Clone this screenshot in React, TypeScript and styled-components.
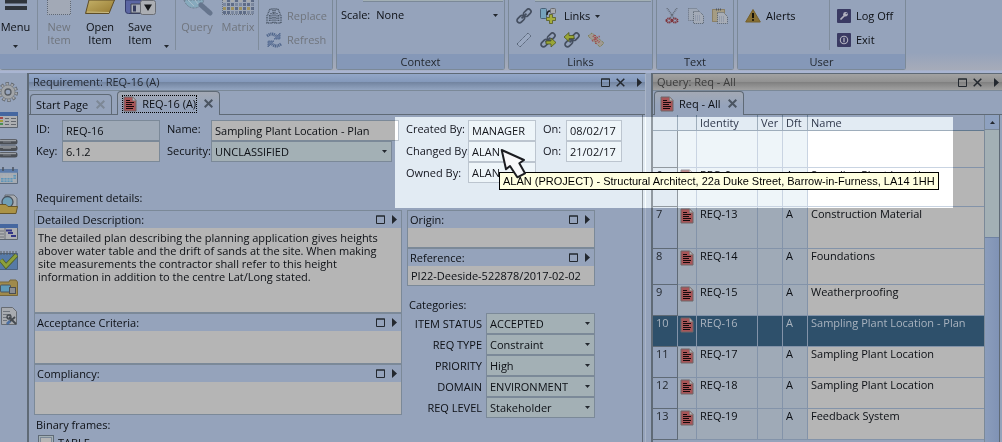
import React from "react";
import styled, { createGlobalStyle, css } from "styled-components";

const color = {
  panel: "#95a3bb",
  footer: "#8598b8",
  line: "#7b8998",
  edge: "#5f6a76",
  paper: "#b5b5b5",
  locked: "#9faab7",
  picker: "#a3b0b5",
  ink: "#0c0f14",
  soft: "#23282f",
  muted: "#70757d",
};

const Global = createGlobalStyle`
  * { box-sizing: border-box; }
  body {
    margin: 0;
    background: ${color.panel};
    color: ${color.ink};
    font: 11px/16px "Open Sans", "Noto Sans", sans-serif;
  }
  button, input, select, textarea { font: inherit; color: inherit; margin: 0; padding: 0; border: 0; border-radius: 0; background: none; }
  svg { display: block; flex: none; }
`;

const Page = styled.div`
  position: relative;
  display: flex;
  flex-direction: column;
  height: 100vh;
  overflow: hidden;
`;

/* ---------- ribbon ---------- */

const Ribbon = styled.header`
  display: flex;
  gap: 3px;
  flex: none;
  height: 73px;
  padding-bottom: 3px;
  background: linear-gradient(#95a3bb 72%, #a6abb9 96%, #a9b5d2 97%);
`;
const Group = styled.section<{ $width: number }>`
  display: flex;
  flex-direction: column;
  flex: none;
  width: ${(p) => p.$width}px;
  border: 1px solid ${color.line};
  border-top: 0;
  border-radius: 0 0 3px 3px;
  background: ${color.panel};
  &:first-child { border-left: 0; }
`;
const GroupBody = styled.div`
  display: flex;
  height: 54px;
`;
const GroupName = styled.h2`
  margin: 0;
  height: 15px;
  background: ${color.footer};
  font-size: 11px;
  font-weight: 400;
  line-height: 16px;
  text-align: center;
  color: ${color.soft};
`;
const Rule = styled.div`
  flex: none;
  width: 1px;
  height: 50px;
  background: #7f8c9c;
`;
const BigButton = styled.button<{ $off?: boolean; $width?: number }>`
  display: flex;
  flex-direction: column;
  flex: none;
  align-items: center;
  width: ${(p) => p.$width ?? 40}px;
  line-height: 13px;
  color: ${(p) => (p.$off ? color.muted : color.ink)};
  svg + span { margin-top: 4px; }
`;
const MenuButton = styled(BigButton)`
  padding-right: 6px;
`;
const Caret = styled.svg`
  width: 5px;
  height: 3px;
  fill: ${color.soft};
`;
const MenuCaret = styled(Caret)`margin-top: 12px;`;
const MoreButton = styled.button`
  display: flex;
  flex: none;
  align-items: flex-end;
  width: 15px;
  height: 48px;
  padding-left: 4px;
`;
const SmallColumn = styled.div<{ $tight?: boolean }>`
  display: flex;
  flex-direction: column;
  gap: 8px;
  padding: ${(p) => (p.$tight ? 6 : 8)}px 7px 0;
`;
const AccountColumn = styled(SmallColumn)`
  width: 75px;
`;
const SmallRow = styled.div`
  display: flex;
  gap: 8px;
`;
const SmallButton = styled.button<{ $off?: boolean }>`
  display: flex;
  align-items: center;
  gap: 5px;
  height: 16px;
  line-height: 16px;
  color: ${(p) => (p.$off ? color.muted : color.ink)};
`;
const Stack = styled.div`
  display: flex;
  flex-direction: column;
  flex: 1;
`;
const ClippedBox = styled.div`
  height: 2px;
  margin: 0 1px 0 26px;
  border-bottom: 1px solid ${color.line};
  background: ${color.picker};
`;
const ScaleRow = styled.div`
  display: flex;
  align-items: center;
  gap: 6px;
  padding: 5px 6px 0 4px;
`;
const PlainPicker = styled.div`
  display: flex;
  align-items: center;
  flex: 1;
  select { flex: 1; appearance: none; height: 16px; }
`;

/* ---------- work area ---------- */

const Work = styled.main`
  display: flex;
  flex: 1;
  min-height: 0;
`;
const SideBar = styled.nav`
  display: flex;
  flex-direction: column;
  gap: 8px;
  width: 27px;
  padding-top: 9px;
  flex: none;
  button { display: block; width: 18px; height: 20px; }
`;
const Pane = styled.section<{ $fixed?: boolean }>`
  display: flex;
  flex-direction: column;
  min-width: 0;
  border-left: 2px solid ${color.edge};
  border-top: 1px solid ${color.edge};
  ${(p) => (p.$fixed ? css`flex: 0 0 351px;` : css`flex: 1; border-right: 1px solid #a9b4c6; margin-right: 5px;`)}
`;
const TitleBar = styled.header<{ $idle?: boolean }>`
  display: flex;
  align-items: center;
  flex: none;
  height: 17px;
  padding: 0 3px 0 4px;
  border-bottom: 1px solid ${color.line};
  background: ${(p) =>
    p.$idle
      ? "linear-gradient(#a2a2a2, #929292 48%, #7f7f7f 50%, #a0a0a0)"
      : "linear-gradient(#93a7c8, #8499bb 48%, #71839f 50%, #93a5c1)"};
  color: ${(p) => (p.$idle ? "#3c3c3c" : "#242a33")};
  h1 { flex: 1; margin: 0; font-size: 11px; font-weight: 400; }
`;
const WindowButtons = styled.div`
  display: flex;
  align-items: center;
  gap: 6px;
  button:last-child { margin-left: 6px; }
`;
const Tabs = styled.div`
  display: flex;
  align-items: flex-end;
  gap: 5px;
  flex: none;
  height: 24px;
  padding-left: 1px;
  border-bottom: 1px solid ${color.edge};
`;
const Tab = styled.div<{ $active?: boolean }>`
  display: flex;
  align-items: center;
  gap: 7px;
  height: ${(p) => (p.$active ? 24 : 20)}px;
  margin-bottom: ${(p) => (p.$active ? -1 : 0)}px;
  padding: 0 6px 0 4px;
  border: 1px solid ${color.edge};
  border-bottom: 0;
  border-radius: 4px 4px 0 0;
  background: ${(p) => (p.$active ? "linear-gradient(#a3a9b4, #95a3bb 60%)" : color.panel)};
`;
const TabLabel = styled.button<{ $focus?: boolean }>`
  display: flex;
  align-items: center;
  gap: 5px;
  height: 18px;
  outline: ${(p) => (p.$focus ? "1px dotted #000" : "0")};
  outline-offset: -1px;
  padding: 0 1px;
`;
const Sheet = styled.div`
  flex: 1;
  min-height: 0;
  margin-right: 2px;
  border-right: 1px solid ${color.edge};
  overflow: hidden;
`;

/* ---------- form ---------- */

const TopForm = styled.div`
  display: flex;
  gap: 7px;
  padding: 3px 20px 0 7px;
`;
const Fields = styled.div<{ $grow?: boolean; $label: number; $field?: number }>`
  display: grid;
  grid-template-columns: ${(p) => p.$label}px ${(p) => (p.$field ? `${p.$field}px` : "minmax(0, 1fr)")};
  flex: ${(p) => (p.$grow ? 1 : "none")};
`;
const Labels = styled.div`
  display: flex;
  flex-direction: column;
  overflow: hidden;
  white-space: nowrap;
  line-height: 22px;
`;
const Values = styled.div`
  display: flex;
  flex-direction: column;
  padding-top: 2px;
`;
const Field = styled.input<{ $locked?: boolean }>`
  width: 100%;
  height: 21px;
  padding: 0 3px;
  border: 1px solid ${color.line};
  background: ${(p) => (p.$locked ? color.locked : color.paper)};
`;
const PickerBox = styled.div<{ $short?: boolean }>`
  display: flex;
  align-items: center;
  height: 21px;
  margin-right: ${(p) => (p.$short ? 7 : 0)}px;
  padding-right: 4px;
  border: 1px solid ${color.line};
  background: ${color.picker};
  select { flex: 1; min-width: 0; height: 19px; padding-left: 3px; appearance: none; }
`;
const Heading = styled.h3<{ $above: number; $left: number; $below?: number }>`
  margin: ${(p) => p.$above}px 0 ${(p) => p.$below ?? 0}px ${(p) => p.$left}px;
  font-size: 11px;
  font-weight: 400;
  line-height: 17px;
`;
const Details = styled.div`
  display: flex;
  gap: 5px;
  padding: 0 47px 0 5px;
`;
const WideColumn = styled.div`
  flex: 1;
  min-width: 0;
`;
const NarrowColumn = styled.div`
  width: 188px;
  flex: none;
`;
const Memo = styled.div`
  border: 1px solid ${color.line};
`;
const MemoHead = styled.div`
  display: flex;
  align-items: center;
  gap: 7px;
  height: 17px;
  padding: 0 4px 0 2px;
  label { flex: 1; line-height: 17px; }
`;
const MemoText = styled.textarea<{ $height: number }>`
  display: block;
  width: 100%;
  height: ${(p) => p.$height}px;
  padding: 3px 12px 3px 3px;
  line-height: 13px;
  resize: none;
  overflow: hidden;
  background: ${color.paper};
`;
const CategoryRow = styled.div`
  display: grid;
  grid-template-columns: 75px minmax(0, 1fr);
  gap: 4px;
  label { line-height: 21px; text-align: right; white-space: nowrap; }
`;
const CheckRow = styled.label`
  display: flex;
  align-items: center;
  gap: 4px;
  margin: 2px 0 0 4px;
  line-height: 16px;
  input {
    appearance: none;
    width: 16px;
    height: 16px;
    border: 1px solid ${color.edge};
    background: ${color.paper};
    box-shadow: inset 0 0 0 1px ${color.picker}, inset 0 0 0 2px ${color.line};
  }
`;

/* ---------- query results ---------- */

const Results = styled.div`
  display: flex;
  height: 100%;
`;
const Grid = styled.table`
  flex: 1;
  align-self: flex-start;
  table-layout: fixed;
  border-collapse: separate;
  border-spacing: 0;
  th, td {
    padding: 0 0 0 3px;
    vertical-align: top;
    text-align: left;
    font-weight: 400;
    white-space: nowrap;
    overflow: hidden;
    line-height: 13px;
    border-right: 1px solid #8393a9;
    border-bottom: 1px solid #8393a9;
  }
  thead th { height: 16px; line-height: 15px; border-color: #62798f; color: #17243a; }
  thead th:last-child, td:last-child { border-right: 0; }
`;
const Row = styled.tr<{ $height: number; $selected?: boolean }>`
  height: ${(p) => p.$height}px;
  th { background: ${color.panel}; border-color: ${color.edge}; color: ${color.soft}; }
  td { background: ${color.locked}; }
  td:nth-child(2) { padding: 1px 0 0 2px; }
  td:last-child { background: ${color.paper}; }
  ${(p) =>
    p.$selected &&
    css`
      && th, && td { background: #2e506b; color: #a9b3bf; border-right-color: #8393a9; }
    `}
`;
const ScrollBar = styled.div`
  display: flex;
  flex-direction: column;
  width: 16px;
  margin-right: -1px;
  border-left: 1px solid ${color.line};
  background: ${color.picker};
`;
const ScrollUp = styled.button`
  display: flex;
  align-items: center;
  justify-content: center;
  height: 15px;
  background: #8ea1c0;
  border-bottom: 1px solid ${color.line};
`;
const Thumb = styled.div`
  flex: 1;
  margin-top: 107px;
  border-top: 1px solid #6f82a3;
  background: linear-gradient(90deg, #8b9dbc, #7f92b5);
`;

/* ---------- layers above the window ---------- */

const Spotlight = styled.div`
  position: absolute;
  left: 395px;
  top: 117px;
  width: 558px;
  height: 91px;
  backdrop-filter: brightness(1.45) saturate(0.45);
  pointer-events: none;
`;
const Tooltip = styled.div`
  position: absolute;
  left: 499px;
  top: 172px;
  height: 18px;
  padding: 0 3px;
  border: 1px solid #000;
  background: #ffffe1;
  color: #000;
  font: 11px/16px "Liberation Sans", Arial, sans-serif;
  white-space: nowrap;
`;
const Pointer = styled.svg`
  position: absolute;
  left: 498px;
  top: 147px;
  pointer-events: none;
`;

/* ---------- drawings ---------- */

const Down = () => <Caret viewBox="0 0 5 3"><path d="M0 0h5L2.5 3z" /></Caret>;

const MaxIcon = () => (
  <svg width="9" height="9" viewBox="0 0 9 9"><path d="M.5 1h8v7.500h-8zM0 1h9" fill="none" stroke="#23282f" /></svg>
);
const PlayIcon = () => (
  <svg width="5" height="9" viewBox="0 0 5 9"><path d="M0 0l5 4.500L0 9z" fill="#23282f" /></svg>
);
const CrossIcon = ({ tone = "#23282f", weight = 1.5 }: { tone?: string; weight?: number }) => (
  <svg width="9" height="9" viewBox="0 0 9 9"><path d="M.7.7l7.600 7.600M8.300.7L.7 8.300" stroke={tone} strokeWidth={weight} /></svg>
);
const ReqIcon = () => (
  <svg width="14" height="16" viewBox="0 0 14 16">
    <path d="M1 1h8.500L13 4.500V15H1z" fill="#a95558" stroke="#6f6668" />
    <path d="M9.500.8v4H13z" fill="#b5b5b5" stroke="#77706f" strokeWidth=".6" />
    <path d="M3 4.500h4M3 6.500h8M3 8.500h6M3 10.500h8M3 12.500h7" stroke="#160a0c" />
  </svg>
);

const MenuIcon = () => (
  <svg width="22" height="16" viewBox="0 0 22 16"><path d="M0 1.500h22M0 8h22" stroke="#30353c" strokeWidth="4" /></svg>
);
const NewIcon = () => (
  <svg width="26" height="16" viewBox="0 0 26 16">
    <path d="M1 0h24v15H1z" fill="#a2a9b6" />
    <path d="M1.500 0v14.500h23V0" fill="none" stroke="#5e6877" strokeDasharray="1 1" />
  </svg>
);
const OpenIcon = () => (
  <svg width="32" height="16" viewBox="0 0 32 16">
    <defs><linearGradient id="open" x2="1" y2="1"><stop stopColor="#c4b169" /><stop offset="1" stopColor="#96792f" /></linearGradient></defs>
    <path d="M5 0h25.500L25 13.500H1.500z" fill="url(#open)" stroke="#5d4d28" />
    <path d="M3 12l22 .5" stroke="#c9bb84" />
  </svg>
);
const SaveIcon = () => (
  <svg width="32" height="16" viewBox="0 0 32 16">
    <path d="M1.500 0v11q0 2.500 3 2.500h20V0z" fill="#5b66a3" stroke="#353d6b" />
    <path d="M7 4h10v9H7z" fill="#a8adb8" stroke="#3e4454" />
    <path d="M9 5.500h3v6H9z" fill="#343b5e" />
    <rect x="16.500" y=".5" width="15" height="14" rx="2" fill="#abaeb3" stroke="#6a6e75" />
    <path d="M20 4.500h8L24 11z" fill="#15171a" />
  </svg>
);
const QueryIcon = () => (
  <svg width="32" height="16" viewBox="0 0 32 16">
    <path d="M3 0q3 8 10 8t10-8z" fill="#87aabd" stroke="#6e7f90" strokeDasharray="2 1" />
    <path d="M7 0l6 6M14 0l3 4" stroke="#a9bccb" />
    <path d="M20 5l9 8" stroke="#66758d" strokeWidth="5" strokeLinecap="round" strokeDasharray="1 .6" />
  </svg>
);
const MatrixIcon = () => {
  const fills = ["#a9abad", "#53627f", "#a08e50", "#75829b"];
  const cells = [];
  for (let r = 0; r < 4; r++)
    for (let c = 0; c < 8; c++)
      cells.push(<rect key={`${r}-${c}`} x={1 + c * 4} y={r * 4 - 1} width="3" height="3" fill={fills[(r * 3 + c * c + r * c) % 4]} opacity=".85" />);
  return (
    <svg width="32" height="16" viewBox="0 0 32 16">
      <path d="M.5 0v14.500h31V0" fill="#9da7b7" stroke="#677181" strokeDasharray="1 1" />
      {cells}
    </svg>
  );
};
const ReplaceIcon = () => (
  <svg width="16" height="16" viewBox="0 0 16 16" fill="none" stroke="#4c5868" strokeDasharray="1 .7">
    <path d="M1 15V8L4 1h3v14zM9 15V1h3l3 7v7z" strokeWidth="1.400" />
    <path d="M3.500 13V7M5 5v8M11 5v8M12.700 13V7M7 5h2" strokeWidth="1.300" />
  </svg>
);
const RefreshIcon = () => (
  <svg width="16" height="16" viewBox="0 0 16 16" fill="none" stroke="#50668c" strokeDasharray="1.200 .6">
    <path d="M1 4q5-4 9 0M15 12q-5 4-9 0" strokeWidth="3" />
    <path d="M14 1v6H8zM2 15V9h6z" fill="#687ca0" />
  </svg>
);

type Mark = "none" | "out" | "in";
const ChainIcon = ({ mark = "none" }: { mark?: Mark }) => (
  <svg width="16" height="16" viewBox="0 0 16 16" fill="none">
    <g stroke="#454f60" strokeWidth="1.700" transform="rotate(-45 8 8)">
      <rect x="-.8" y="5.500" width="8.500" height="5" rx="2.500" />
      <rect x="8.300" y="5.500" width="8.500" height="5" rx="2.500" />
      <path d="M4.500 8h7" />
    </g>
    {mark === "out" && <path d="M6 9h5V6l5 4.500-5 4.500v-3H6z" fill="#9aa636" stroke="#4d5620" strokeWidth=".8" />}
    {mark === "in" && <path d="M10 3.500H5v-3L0 5l5 4.500v-3h5z" fill="#9aa636" stroke="#4d5620" strokeWidth=".8" />}
  </svg>
);
const AddLinkIcon = () => (
  <svg width="16" height="16" viewBox="0 0 16 16">
    <rect x=".5" y=".5" width="6" height="10" rx="1" fill="#76a3bd" stroke="#496177" />
    <rect x="10.500" y=".5" width="5" height="5" rx="1" fill="#a7a9ad" stroke="#6b6c70" />
    <path d="M7 7q0-4 3-4" fill="none" stroke="#1a1d22" strokeWidth="1.500" />
    <path d="M9.500 6.500h3v3h3v3h-3v3h-3v-3h-3v-3h3z" fill="#a5ad3c" stroke="#555c22" strokeWidth=".8" />
  </svg>
);
const BarIcon = () => (
  <svg width="16" height="16" viewBox="0 0 16 16">
    <path d="M1 12L12 1l3 3L4 15z" fill="#9ba9c1" stroke="#4f5b6d" strokeWidth=".9" strokeDasharray="1.500 .5" />
  </svg>
);
const CutLinkIcon = () => (
  <svg width="16" height="16" viewBox="0 0 16 16">
    <path d="M0 4l4-3 12 10-4 4z" fill="#a09a93" stroke="#74763e" strokeDasharray="1 1" />
    <path d="M5 4l7 7M4 9l8-5M7 3l1 9" stroke="#a04a50" strokeWidth="1.800" strokeDasharray="1 1" />
  </svg>
);
const CutIcon = () => (
  <svg width="16" height="16" viewBox="-1 0 16 16" fill="none">
    <path d="M2 0l7 10M12 0L5 10" stroke="#636b78" strokeWidth="1.600" strokeDasharray="1 .8" />
    <path d="M1.500 12.500a2.500 2 0 1 0 5 0a2.500 2 0 1 0-5 0M7.500 12.500a2.500 2 0 1 0 5 0a2.500 2 0 1 0-5 0" stroke="#7e2f35" strokeWidth="2" strokeDasharray="1.200 .6" />
  </svg>
);
const CopyIcon = () => (
  <svg width="16" height="16" viewBox="0 0 16 16" stroke="#66707f" strokeDasharray="1 1">
    <path d="M.5.5h8l2 2v10H.5z" fill="#9fa8b6" />
    <path d="M5.500 3.500h6l4 4v8h-10z" fill="#a4abb7" stroke="#59636f" />
    <path d="M7 8h6M7 10h6M7 12h6" stroke="#7e8ba3" />
  </svg>
);
const PasteIcon = () => (
  <svg width="16" height="16" viewBox="0 0 16 16" stroke="#78602f" strokeDasharray="1 1">
    <path d="M.5 1.500h12v12H.5z" fill="#a59c83" />
    <path d="M4 1.500h5" stroke="#4f5660" strokeWidth="2" />
    <path d="M5.500 4.500h6l4 4v7h-10z" fill="#a8adb6" stroke="#59636f" />
    <path d="M7 9h6M7 11h6M7 13h6" stroke="#7e8ba3" />
  </svg>
);
const AlertIcon = () => (
  <svg width="16" height="16" viewBox="0 0 16 16">
    <path d="M8 1.500L15.300 14H.7z" fill="#876f33" stroke="#75602c" strokeLinejoin="round" />
    <path d="M8 5v5M8 11.200v1.600" stroke="#15120a" strokeWidth="2" />
  </svg>
);
const KeyIcon = () => (
  <svg width="14" height="14" viewBox="0 0 14 14">
    <rect width="14" height="14" rx="1" fill="#3a3a63" />
    <circle cx="8.500" cy="5.300" r="2.300" fill="#b2b2bf" /><path d="M8 6l-4.500 4.500" stroke="#b2b2bf" strokeWidth="1.700" /><circle cx="9.300" cy="4.600" r=".7" fill="#3a3a63" />
  </svg>
);
const ExitIcon = () => (
  <svg width="14" height="14" viewBox="0 0 14 14">
    <rect width="14" height="14" rx="1" fill="#3a3a63" />
    <circle cx="7" cy="7" r="3.700" fill="none" stroke="#b2b2bf" strokeWidth="1.100" /><path d="M7 4.800v4.400" stroke="#b2b2bf" strokeWidth="1.300" />
  </svg>
);

const sideIcons: { name: string; art: React.ReactNode }[] = [
  {
    name: "Settings",
    art: (
      <>
        <circle cx="10" cy="10" r="8" fill="none" stroke="#5d6269" strokeWidth="4" strokeDasharray="3 2.027" />
        <circle cx="10" cy="10" r="8" fill="none" stroke="#a5a8ac" strokeWidth="2.400" strokeDasharray="2 3.027" strokeDashoffset="-.5" />
        <circle cx="10" cy="10" r="7" fill="#a2a5a9" stroke="#74787d" strokeWidth=".7" />
        <circle cx="10" cy="10" r="3" fill="#95a3bb" stroke="#565b62" strokeWidth="1.300" />
      </>
    ),
  },
  {
    name: "Lists",
    art: (
      <>
        <path d="M1.500 2.500h18v15h-18z" fill="#adafb2" stroke="#5c6570" />
        <path d="M1 4h19" stroke="#4567a0" strokeWidth="4" />
        <path d="M2 8h3" stroke="#a34a4a" strokeWidth="2" /><path d="M2 11h3" stroke="#a59a3c" strokeWidth="2" /><path d="M2 14h3" stroke="#4a8f55" strokeWidth="2" />
        <path d="M7 8.500h4M7 11.500h4M7 14.500h4M13 8.500h5M13 11.500h5M13 14.500h5" stroke="#62676e" />
      </>
    ),
  },
  {
    name: "Database",
    art: (
      <>
        {[1, 7.5, 14].map((y) => (
          <g key={y}>
            <rect x="1" y={y} width="18.500" height="5.500" rx="2.500" fill="#4a4e54" />
            <path d={`M2 ${y + 1.5}h16`} stroke="#9b9fa4" strokeWidth="1.500" />
            <path d={`M5 ${y + 3}h8`} stroke="#7b7f85" />
          </g>
        ))}
      </>
    ),
  },
  {
    name: "Calendar",
    art: (
      <>
        <path d="M1.500 3.500h18v14h-18z" fill="#a4aab2" stroke="#5d6b7d" />
        <path d="M1 5h19" stroke="#5c7cab" strokeWidth="3.500" /><path d="M5 1v4M15 1v4" stroke="#4a525d" strokeWidth="1.500" />
        <path d="M3 12h12V9h3v4h-3v3H3z" fill="#5f94b8" /><path d="M6 8v8M9 8v8M12 8v8M15 8v8M3 11h15M3 14h15" stroke="#b0b4b8" strokeWidth=".7" />
      </>
    ),
  },
  {
    name: "Find",
    art: (
      <>
        <path d="M7 1h9l3 3v9H7z" fill="#a7abb0" stroke="#666c74" />
        <circle cx="9.500" cy="8" r="5.500" fill="#6f9fb7" stroke="#48525e" strokeWidth="1.300" />
        <path d="M1 10.500h7l2 2h9.500L18 19.500H1z" fill="#ab9346" stroke="#65562c" />
      </>
    ),
  },
  {
    name: "Plan",
    art: (
      <>
        <path d="M1.500 2.500h18v15h-18z" fill="#adafb2" stroke="#5c6570" />
        <path d="M1 4h19" stroke="#4567a0" strokeWidth="4" />
        <path d="M2 9h4M2 12h4M2 15h4M7 6v11" stroke="#6e737a" />
        <path d="M8 8.500h6M10 11h5M13 14h5" stroke="#343786" strokeWidth="2" />
      </>
    ),
  },
  {
    name: "Tasks",
    art: (
      <>
        <path d="M1.500 3.500h18v16h-18z" fill="#567aa7" stroke="#49617f" />
        <path d="M3 5V1M6 5V1M9 5V1M12 5V1M15 5V1M18 5V1" stroke="#555b62" />
        <path d="M3 10l5 6L18.500 5" fill="none" stroke="#4e5e28" strokeWidth="4.500" />
        <path d="M3 10l5 6L18.500 5" fill="none" stroke="#8ca03c" strokeWidth="3" />
      </>
    ),
  },
  {
    name: "Assets",
    art: (
      <>
        <path d="M1 4h10l1-2h6l1.500 2v13.500H1z" fill="#a08a4b" stroke="#76663a" />
        <rect x="2.500" y="7" width="10" height="7" rx="1" fill="#5f9ab8" stroke="#4a5560" />
        <rect x="11.500" y="9.500" width="6" height="6" fill="#8a8d92" stroke="#4b4e53" />
      </>
    ),
  },
  {
    name: "Reports",
    art: (
      <>
        <path d="M3.500 1.500h11l4 4v13h-15z" fill="#a8abb0" stroke="#666b72" />
        <path d="M5 5.500h7M5 8.500h8M5 11.500h5M5 14.500h4" stroke="#6f747c" />
        <path d="M9 18l8-7M11 11l7 7" stroke="#44494f" strokeWidth="1.800" />
        <circle cx="11" cy="11" r="2" fill="none" stroke="#44494f" strokeWidth="1.300" /><path d="M9 18l3-3" stroke="#4b70a5" strokeWidth="2.500" />
      </>
    ),
  },
];

/* ---------- data ---------- */

const categories = [
  ["ITEM STATUS", "ACCEPTED"],
  ["REQ TYPE", "Constraint"],
  ["PRIORITY", "High"],
  ["DOMAIN", "ENVIRONMENT"],
  ["REQ LEVEL", "Stakeholder"],
];

const rows: { no: string; id: string; dft: string; name: string; height: number }[] = [
  { no: "", id: "", dft: "", name: "", height: 37 },
  { no: "6", id: "REQ-9", dft: "A", name: "Sampling Plant Location", height: 39 },
  { no: "7", id: "REQ-13", dft: "A", name: "Construction Material", height: 42 },
  { no: "8", id: "REQ-14", dft: "A", name: "Foundations", height: 36 },
  { no: "9", id: "REQ-15", dft: "A", name: "Weatherproofing", height: 31 },
  { no: "10", id: "REQ-16", dft: "A", name: "Sampling Plant Location - Plan", height: 31 },
  { no: "11", id: "REQ-17", dft: "A", name: "Sampling Plant Location", height: 31 },
  { no: "12", id: "REQ-18", dft: "A", name: "Sampling Plant Location", height: 31 },
  { no: "13", id: "REQ-19", dft: "A", name: "Feedback System", height: 31 },
];

const description =
  "The detailed plan describing the planning application gives heights abover water table and the drift of sands at the site. When making site measurements the contractor shall refer to this height information in addition to the centre Lat/Long stated.";

/* ---------- pieces ---------- */

const Picker = ({ id, value, short }: { id: string; value: string; short?: boolean }) => (
  <PickerBox $short={short}>
    <select id={id} defaultValue={value}><option>{value}</option></select>
    <Down />
  </PickerBox>
);

const MemoField = ({ id, label, height, value = "" }: { id: string; label: string; height: number; value?: string }) => (
  <Memo>
    <MemoHead>
      <label htmlFor={id}>{label}</label>
      <button aria-label="Enlarge"><MaxIcon /></button>
      <button aria-label="More"><PlayIcon /></button>
    </MemoHead>
    <MemoText id={id} $height={height} defaultValue={value} spellCheck={false} />
  </Memo>
);

const Controls = () => (
  <WindowButtons>
    <button aria-label="Maximize"><MaxIcon /></button>
    <button aria-label="Close"><CrossIcon /></button>
    <button aria-label="More"><PlayIcon /></button>
  </WindowButtons>
);

export default function App() {
  return (
    <Page>
      <Global />
      <Ribbon>
        <Group $width={333}>
          <GroupBody>
            <MenuButton $width={37}><MenuIcon /><span>Menu</span><MenuCaret viewBox="0 0 5 3"><path d="M0 0h5L2.500 3z" /></MenuCaret></MenuButton>
            <Rule />
            <BigButton $off $width={42}><NewIcon /><span>New<br />Item</span></BigButton>
            <BigButton><OpenIcon /><span>Open<br />Item</span></BigButton>
            <BigButton><SaveIcon /><span>Save<br />Item</span></BigButton>
            <MoreButton aria-label="More save options"><Down /></MoreButton>
            <Rule />
            <BigButton $off $width={42}><QueryIcon /><span>Query</span></BigButton>
            <BigButton $off><MatrixIcon /><span>Matrix</span></BigButton>
            <Rule />
            <SmallColumn>
              <SmallButton $off><ReplaceIcon />Replace</SmallButton>
              <SmallButton $off><RefreshIcon />Refresh</SmallButton>
            </SmallColumn>
          </GroupBody>
          <GroupName />
        </Group>
        <Group $width={169}>
          <GroupBody>
            <Stack>
              <ClippedBox />
              <ScaleRow>
                <label htmlFor="scale">Scale:</label>
                <PlainPicker>
                  <select id="scale" defaultValue="None"><option>None</option></select>
                  <Down />
                </PlainPicker>
              </ScaleRow>
            </Stack>
          </GroupBody>
          <GroupName>Context</GroupName>
        </Group>
        <Group $width={145}>
          <GroupBody>
            <Stack>
              <ClippedBox />
              <SmallColumn $tight>
                <SmallRow>
                  <SmallButton aria-label="Link"><ChainIcon /></SmallButton>
                  <SmallButton aria-label="Add link"><AddLinkIcon /></SmallButton>
                  <SmallButton>Links<Down /></SmallButton>
                </SmallRow>
                <SmallRow>
                  <SmallButton aria-label="Mark"><BarIcon /></SmallButton>
                  <SmallButton aria-label="Outgoing links"><ChainIcon mark="out" /></SmallButton>
                  <SmallButton aria-label="Incoming links"><ChainIcon mark="in" /></SmallButton>
                  <SmallButton aria-label="Remove link"><CutLinkIcon /></SmallButton>
                </SmallRow>
              </SmallColumn>
            </Stack>
          </GroupBody>
          <GroupName>Links</GroupName>
        </Group>
        <Group $width={78}>
          <GroupBody>
            <SmallColumn>
              <SmallRow>
                <SmallButton aria-label="Cut"><CutIcon /></SmallButton>
                <SmallButton aria-label="Copy"><CopyIcon /></SmallButton>
                <SmallButton aria-label="Paste"><PasteIcon /></SmallButton>
              </SmallRow>
            </SmallColumn>
          </GroupBody>
          <GroupName>Text</GroupName>
        </Group>
        <Group $width={169}>
          <GroupBody>
            <Stack>
              <SmallColumn><SmallButton><AlertIcon />Alerts</SmallButton></SmallColumn>
            </Stack>
            <Rule />
            <AccountColumn>
              <SmallButton><KeyIcon />Log Off</SmallButton>
              <SmallButton><ExitIcon />Exit</SmallButton>
            </AccountColumn>
          </GroupBody>
          <GroupName>User</GroupName>
        </Group>
      </Ribbon>

      <Work>
        <SideBar>
          {sideIcons.map((item) => (
            <button key={item.name} aria-label={item.name}>
              <svg width="18" height="20" viewBox="2 0 18 20">{item.art}</svg>
            </button>
          ))}
        </SideBar>

        <Pane>
          <TitleBar><h1>Requirement: REQ-16 (A)</h1><Controls /></TitleBar>
          <Tabs>
            <Tab><TabLabel>Start Page</TabLabel><button aria-label="Close tab"><CrossIcon tone="#7d8896" weight={2} /></button></Tab>
            <Tab $active><TabLabel $focus><ReqIcon />REQ-16 (A)</TabLabel><button aria-label="Close tab"><CrossIcon tone="#4b5562" weight={2} /></button></Tab>
          </Tabs>
          <Sheet>
            <TopForm>
              <Fields $label={26} $field={98}>
                <Labels><label htmlFor="id">ID:</label><label htmlFor="key">Key:</label></Labels>
                <Values><Field id="id" $locked readOnly value="REQ-16" /><Field id="key" defaultValue="6.1.2" /></Values>
              </Fields>
              <Fields $label={44} $grow>
                <Labels><label htmlFor="name">Name:</label><label htmlFor="security">Security:</label></Labels>
                <Values><Field id="name" defaultValue="Sampling Plant Location - Plan" /><Picker id="security" value="UNCLASSIFIED" short /></Values>
              </Fields>
              <Fields $label={62} $field={68}>
                <Labels><label htmlFor="created">Created By:</label><label htmlFor="changed">Changed By:</label><label htmlFor="owned">Owned By:</label></Labels>
                <Values><Field id="created" $locked readOnly value="MANAGER" /><Field id="changed" $locked readOnly value="ALAN" /><Field id="owned" $locked readOnly value="ALAN" /></Values>
              </Fields>
              <Fields $label={23} $field={56}>
                <Labels><label htmlFor="createdOn">On:</label><label htmlFor="changedOn">On:</label></Labels>
                <Values><Field id="createdOn" $locked readOnly value="08/02/17" /><Field id="changedOn" $locked readOnly value="21/02/17" /></Values>
              </Fields>
            </TopForm>

            <Heading $above={5} $left={7} $below={4}>Requirement details:</Heading>
            <Details>
              <WideColumn>
                <MemoField id="description" label="Detailed Description:" height={84} value={description} />
                <MemoField id="acceptance" label="Acceptance Criteria:" height={32} />
                <MemoField id="compliancy" label="Compliancy:" height={32} />
                <Heading $above={1} $left={2}>Binary frames:</Heading>
                <CheckRow><input type="checkbox" />TABLE</CheckRow>
              </WideColumn>
              <NarrowColumn>
                <MemoField id="origin" label="Origin:" height={19} />
                <MemoField id="reference" label="Reference:" height={19} value="PI22-Deeside-522878/2017-02-02" />
                <Heading $above={10} $left={2}>Categories:</Heading>
                {categories.map(([label, value]) => (
                  <CategoryRow key={label}>
                    <label htmlFor={label}>{label}</label>
                    <Picker id={label} value={value} />
                  </CategoryRow>
                ))}
              </NarrowColumn>
            </Details>
          </Sheet>
        </Pane>

        <Pane $fixed>
          <TitleBar $idle><h1>Query: Req - All</h1><Controls /></TitleBar>
          <Tabs>
            <Tab $active><TabLabel><ReqIcon />Req - All</TabLabel><button aria-label="Close tab"><CrossIcon tone="#4b5562" weight={2} /></button></Tab>
          </Tabs>
          <Sheet>
            <Results>
              <Grid>
                <colgroup><col width="25" /><col width="19" /><col width="61" /><col width="25" /><col width="25" /><col /></colgroup>
                <thead>
                  <tr><th /><th /><th>Identity</th><th>Ver</th><th>Dft</th><th>Name</th></tr>
                </thead>
                <tbody>
                  {rows.map((r, i) => (
                    <Row key={i} $height={r.height} $selected={r.no === "10"}>
                      <th scope="row">{r.no}</th>
                      <td>{r.id && <ReqIcon />}</td>
                      <td>{r.id}</td>
                      <td />
                      <td>{r.dft}</td>
                      <td>{r.name}</td>
                    </Row>
                  ))}
                </tbody>
              </Grid>
              <ScrollBar>
                <ScrollUp aria-label="Scroll up"><svg width="5" height="3" viewBox="0 0 5 3"><path d="M0 3h5L2.500 0z" fill="#23282f" /></svg></ScrollUp>
                <Thumb />
              </ScrollBar>
            </Results>
          </Sheet>
        </Pane>
      </Work>

      <Spotlight />
      <Tooltip role="tooltip">ALAN (PROJECT) - Structural Architect, 22a Duke Street, Barrow-in-Furness, LA14 1HH</Tooltip>
      <Pointer width="30" height="34" viewBox="0 0 30 34">
        <path d="M3.700 3L26 13l-4.700 3.300 5.700 10-7.700 4-7.300-11.300-4 3.300z" fill="#f7f7f9" stroke="#1b1c20" strokeWidth="2" strokeLinejoin="round" />
      </Pointer>
    </Page>
  );
}
